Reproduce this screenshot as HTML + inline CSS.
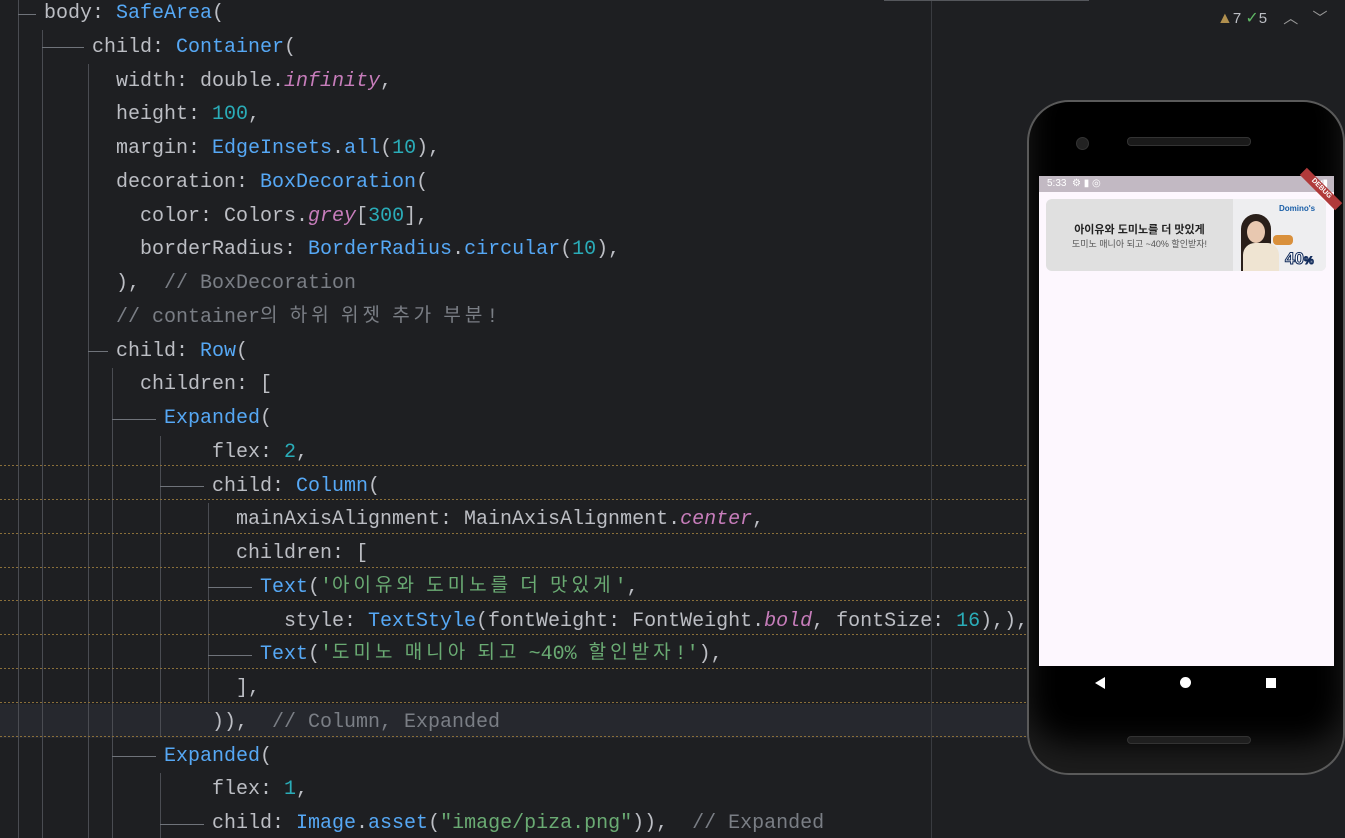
<!DOCTYPE html>
<html style="width:1345px;height:838px;overflow:hidden"><head><meta charset="utf-8"><style>
body{margin:0;width:1345px;height:838px;background:#1e1f22;overflow:hidden;position:relative;font-family:"Liberation Mono","Noto Sans CJK KR",monospace;}
.code{position:absolute;left:0;top:-3px;font-size:20px;line-height:33.75px;color:#bcbec4;}
.l{height:33.75px;position:relative;white-space:pre;}
.b{color:#56a8f5}.n{color:#2aacb8}.p{color:#c77dbb;font-style:italic}.s{color:#6aab73}.c{color:#7a7e85}
.k{letter-spacing:4px;font-family:"Noto Sans CJK KR",sans-serif;font-size:19px;line-height:0;vertical-align:1px}
.v{position:absolute;width:1px;background:#4a4c52}
.h{position:absolute;height:1px;background:#6f737a}
.sq{position:absolute;left:0;width:1027px;height:1px;background:repeating-linear-gradient(90deg,#8a6f3a 0 2px,transparent 2px 4px)}
</style></head><body>
<div style="position:absolute;left:0;top:704px;width:1027px;height:34px;background:#26282e"></div>
<div style="position:absolute;left:931px;top:0;width:1px;height:838px;background:#393b40"></div>
<div style="position:absolute;left:884px;top:0;width:205px;height:1px;background:#55575c"></div>
<div class="v" style="left:18px;top:0;height:838px"></div>
<div class="h" style="left:18px;top:14px;width:18px"></div>
<div class="v" style="left:42px;top:30px;height:808px"></div>
<div class="h" style="left:42px;top:47px;width:42px"></div>
<div class="v" style="left:88px;top:64px;height:774px"></div>
<div class="h" style="left:88px;top:351px;width:20px"></div>
<div class="v" style="left:112px;top:368px;height:470px"></div>
<div class="h" style="left:112px;top:419px;width:44px"></div>
<div class="h" style="left:112px;top:756px;width:44px"></div>
<div class="v" style="left:160px;top:436px;height:300px"></div>
<div class="h" style="left:160px;top:486px;width:44px"></div>
<div class="v" style="left:160px;top:773px;height:65px"></div>
<div class="h" style="left:160px;top:824px;width:44px"></div>
<div class="v" style="left:208px;top:503px;height:200px"></div>
<div class="h" style="left:208px;top:587px;width:44px"></div>
<div class="h" style="left:208px;top:655px;width:44px"></div>
<div class="sq" style="top:465px"></div><div class="sq" style="top:499px"></div><div class="sq" style="top:533px"></div><div class="sq" style="top:567px"></div><div class="sq" style="top:600px"></div><div class="sq" style="top:634px"></div><div class="sq" style="top:668px"></div><div class="sq" style="top:702px"></div><div class="sq" style="top:736px"></div>
<div class="code">
<div class="l" style="left:44px">body: <span class="b">SafeArea</span>(</div>
<div class="l" style="left:92px">child: <span class="b">Container</span>(</div>
<div class="l" style="left:116px">width: double.<span class="p">infinity</span>,</div>
<div class="l" style="left:116px">height: <span class="n">100</span>,</div>
<div class="l" style="left:116px">margin: <span class="b">EdgeInsets</span>.<span class="b">all</span>(<span class="n">10</span>),</div>
<div class="l" style="left:116px">decoration: <span class="b">BoxDecoration</span>(</div>
<div class="l" style="left:140px">color: Colors.<span class="p">grey</span>[<span class="n">300</span>],</div>
<div class="l" style="left:140px">borderRadius: <span class="b">BorderRadius</span>.<span class="b">circular</span>(<span class="n">10</span>),</div>
<div class="l" style="left:116px">),  <span class="c">// BoxDecoration</span></div>
<div class="l" style="left:116px"><span class="c">// container<span class="k">의 하위 위젯 추가 부분</span>!</span></div>
<div class="l" style="left:116px">child: <span class="b">Row</span>(</div>
<div class="l" style="left:140px">children: [</div>
<div class="l" style="left:164px"><span class="b">Expanded</span>(</div>
<div class="l" style="left:212px">flex: <span class="n">2</span>,</div>
<div class="l" style="left:212px">child: <span class="b">Column</span>(</div>
<div class="l" style="left:236px">mainAxisAlignment: MainAxisAlignment.<span class="p">center</span>,</div>
<div class="l" style="left:236px">children: [</div>
<div class="l" style="left:260px"><span class="b">Text</span>(<span class="s">'<span class="k">아이유와 도미노를 더 맛있게</span>'</span>,</div>
<div class="l" style="left:284px">style: <span class="b">TextStyle</span>(fontWeight: FontWeight.<span class="p">bold</span>, fontSize: <span class="n">16</span>),),</div>
<div class="l" style="left:260px"><span class="b">Text</span>(<span class="s">'<span class="k">도미노 매니아 되고 </span>~40% <span class="k">할인받자</span>!'</span>),</div>
<div class="l" style="left:236px">],</div>
<div class="l" style="left:212px">)),  <span class="c">// Column, Expanded</span></div>
<div class="l" style="left:164px"><span class="b">Expanded</span>(</div>
<div class="l" style="left:212px">flex: <span class="n">1</span>,</div>
<div class="l" style="left:212px">child: <span class="b">Image</span>.<span class="b">asset</span>(<span class="s">"image/piza.png"</span>)),  <span class="c">// Expanded</span></div>
</div>
<div style="position:absolute;left:1217px;top:7px;font:15px 'Liberation Sans',sans-serif;color:#bcbec4">
<span style="color:#b08f4e;font-size:16px">▲</span>7 <span style="color:#5fb865;font-size:16px">✓</span>5 <span style="margin-left:12px;color:#999">︿</span> <span style="margin-left:10px;color:#999">﹀</span></div>
<div style="position:absolute;left:1027px;top:100px;width:318px;height:675px;border-radius:42px;background:#000;border:2px solid #5a5a5a;box-sizing:border-box;box-shadow:inset 0 -30px 30px #1c1c1c"></div>
<div style="position:absolute;left:1076px;top:137px;width:11px;height:11px;border-radius:50%;background:#222;border:1px solid #333"></div>
<div style="position:absolute;left:1127px;top:137px;width:122px;height:7px;border-radius:4px;background:#1a1a1a;border:1px solid #333"></div>
<div style="position:absolute;left:1127px;top:736px;width:122px;height:6px;border-radius:4px;background:#1f1f1f;border:1px solid #333"></div>
<div style="position:absolute;left:1039px;top:176px;width:295px;height:490px;background:#fdf7fe"></div>
<div style="position:absolute;left:1039px;top:176px;width:295px;height:16px;background:#c2b9c3;font:10px 'Liberation Sans',sans-serif;color:#fff;line-height:16px;padding-left:8px;box-sizing:border-box">5:33 &nbsp;⚙ ▮ ◎<span style="float:right;margin-right:6px">▾◢▮</span></div>
<div style="position:absolute;left:1046px;top:199px;width:280px;height:72px;border-radius:6px;background:#e0e0e0;overflow:hidden">
<div style="position:absolute;left:0;top:22px;width:187px;text-align:center;font:bold 11px 'Liberation Sans','Noto Sans CJK KR',sans-serif;color:#222">아이유와 도미노를 더 맛있게</div>
<div style="position:absolute;left:0;top:38px;width:187px;text-align:center;font:9px 'Liberation Sans','Noto Sans CJK KR',sans-serif;color:#555">도미노 매니아 되고 ~40% 할인받자!</div>
<div style="position:absolute;left:187px;top:0;width:93px;height:72px;background:#eeeef0">
<div style="position:absolute;left:46px;top:5px;font:bold 8px 'Liberation Sans',sans-serif;color:#1a5fa8">Domino's</div>
<div style="position:absolute;left:8px;top:15px;width:30px;height:60px;border-radius:15px 15px 0 0;background:#2a1f1a"></div>
<div style="position:absolute;left:14px;top:22px;width:18px;height:22px;border-radius:50%;background:#e8c8b0"></div>
<div style="position:absolute;left:10px;top:44px;width:36px;height:30px;border-radius:12px 12px 0 0;background:#efe4d2"></div>
<div style="position:absolute;left:40px;top:36px;width:20px;height:10px;border-radius:4px;background:#d9903c"></div>
<div style="position:absolute;left:52px;top:50px;font:bold 17px 'Liberation Sans',sans-serif;color:#fff;-webkit-text-stroke:1px #102a5a">40<span style="font-size:11px">%</span></div>
</div></div>
<div style="position:absolute;left:1296px;top:184px;width:50px;height:10px;background:#b03a3a;transform:rotate(45deg);font:bold 7px 'Liberation Sans',sans-serif;color:#fff;text-align:center;line-height:10px">DEBUG</div>
<div style="position:absolute;left:1095px;top:677px;width:0;height:0;border-top:6px solid transparent;border-bottom:6px solid transparent;border-right:10px solid #fff"></div>
<div style="position:absolute;left:1180px;top:677px;width:11px;height:11px;border-radius:50%;background:#fff"></div>
<div style="position:absolute;left:1266px;top:678px;width:10px;height:10px;background:#fff"></div>
</body></html>
